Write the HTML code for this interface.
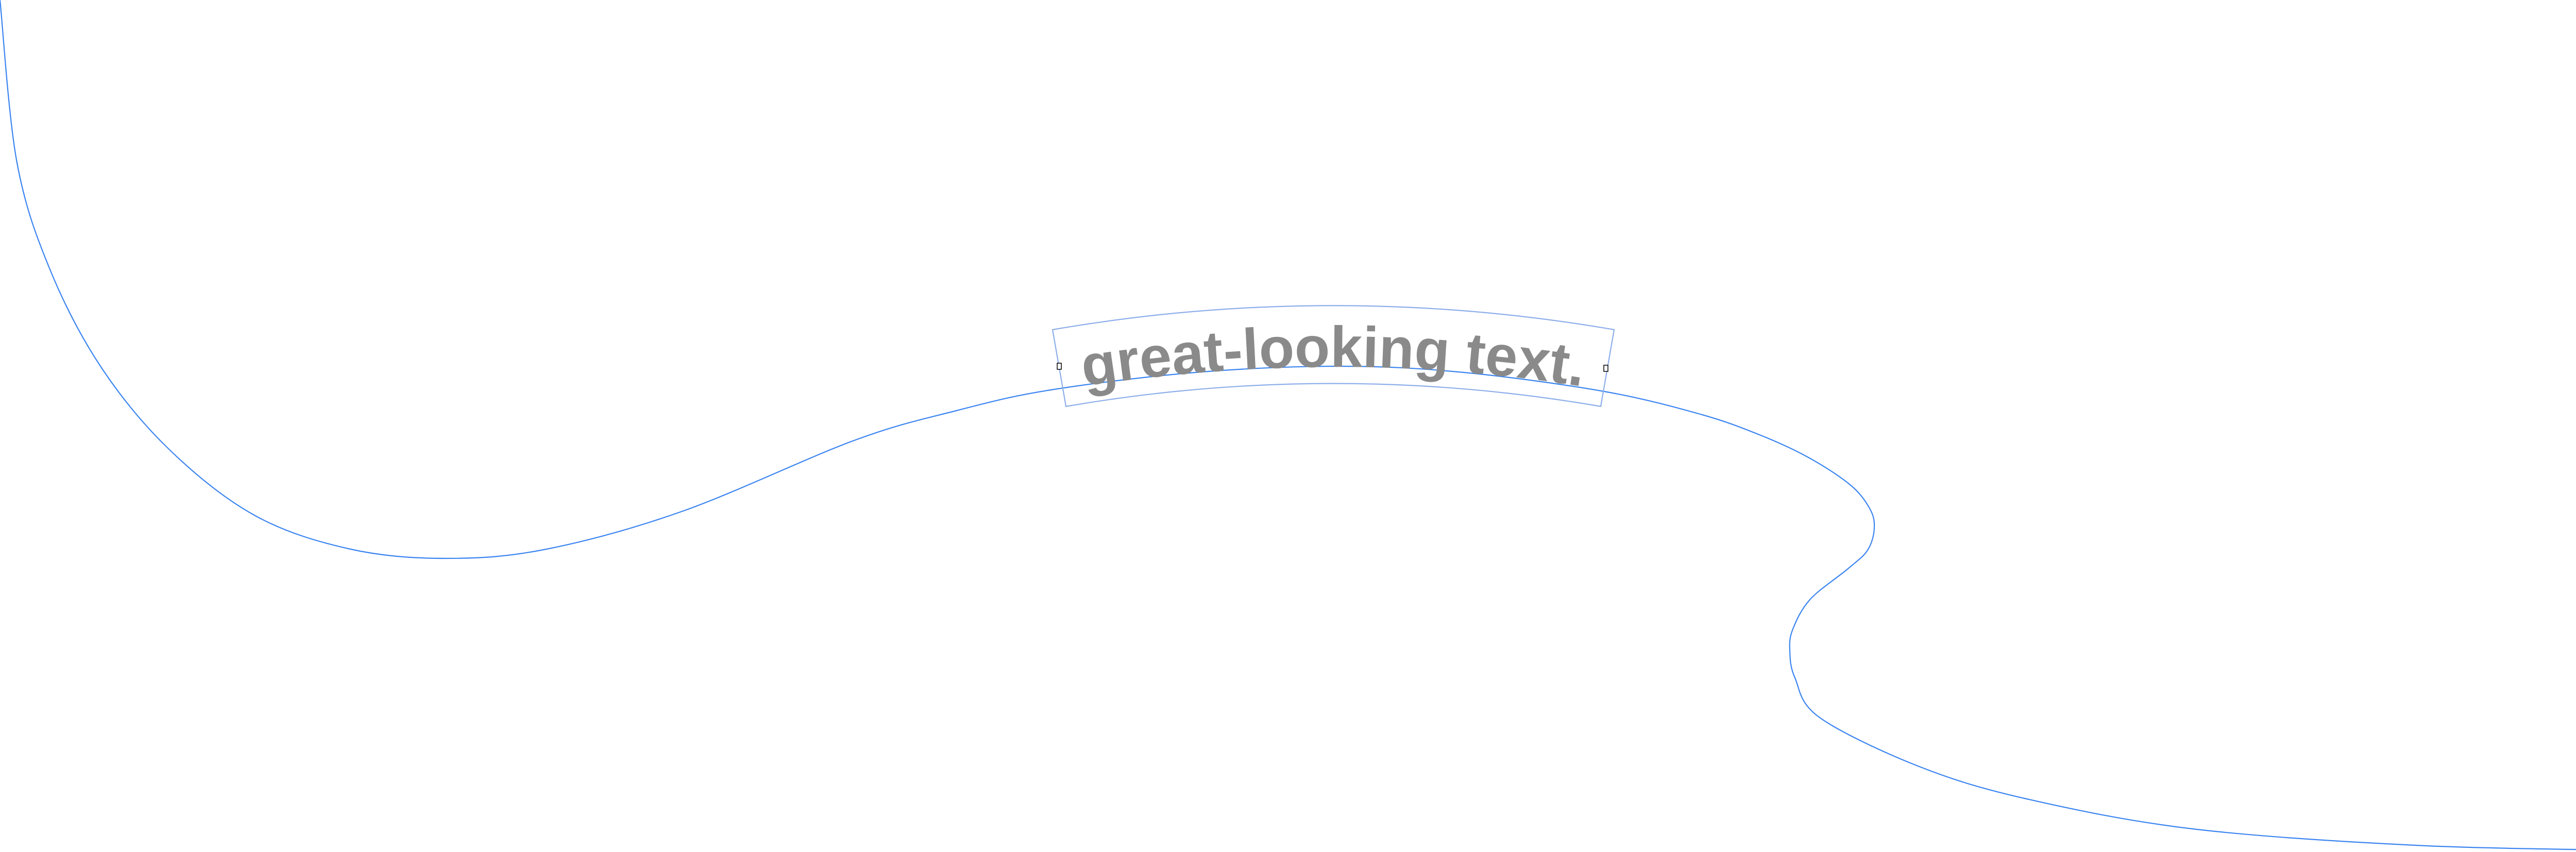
<!DOCTYPE html>
<html><head><meta charset="utf-8"><style>
html,body{margin:0;padding:0;background:#fff;width:5120px;height:1654px;overflow:hidden}
svg{display:block}
</style></head><body>
<svg id="s" width="5120" height="1654" viewBox="0 0 5120 1654" xmlns="http://www.w3.org/2000/svg">
<defs>
<path id="base" d="M 1588 879 A 3081 3081 0 0 1 3588 879" fill="none"/>
</defs>
<path id="curve" fill="none" stroke="#3a84f0" stroke-width="2.2"/>
<path d="M 2043 640 A 3200 3200 0 0 1 3133 640 L 3107 789 A 3049 3049 0 0 0 2069 789 Z" fill="none" stroke="#8daeea" stroke-width="2.2"/>
<text font-family="Liberation Sans, Arial, sans-serif" font-weight="bold" font-size="112" fill="#8a8a8a"><textPath href="#base" startOffset="50%" text-anchor="middle">great-looking text.</textPath></text>
<rect x="2052" y="705" width="8" height="12" fill="#fff" stroke="#000" stroke-width="1.5"/>
<rect x="3113" y="709" width="8" height="12" fill="#fff" stroke="#000" stroke-width="1.5"/>
</svg>
<script>
var p=[[0,0],[33,316],[99,528],[199,717],[332,876],[497,1002],[680,1066],[866,1084],[1061,1066],[1326,992],[1658,855],[1857,797],[2039,757],[2321,723],[2600,711],[2841,723],[3114,760],[3300,804],[3415,844],[3510,888],[3591,941],[3629,987],[3638,1025],[3625,1068],[3587,1104],[3514,1163],[3480,1221],[3474,1263],[3484,1316],[3532,1393],[3725,1488],[3934,1551],[4255,1609],[4689,1641],[5120,1651]];
var d="M"+p[0][0]+" "+p[0][1];
for(var i=0;i<p.length-1;i++){
 var p0=p[i-1]||p[i],p1=p[i],p2=p[i+1],p3=p[i+2]||p[i+1];
 var c1=[p1[0]+(p2[0]-p0[0])/6,p1[1]+(p2[1]-p0[1])/6];
 var c2=[p2[0]-(p3[0]-p1[0])/6,p2[1]-(p3[1]-p1[1])/6];
 d+=" C"+c1[0]+" "+c1[1]+" "+c2[0]+" "+c2[1]+" "+p2[0]+" "+p2[1];
}
document.getElementById("curve").setAttribute("d",d);
</script>
</body></html>
